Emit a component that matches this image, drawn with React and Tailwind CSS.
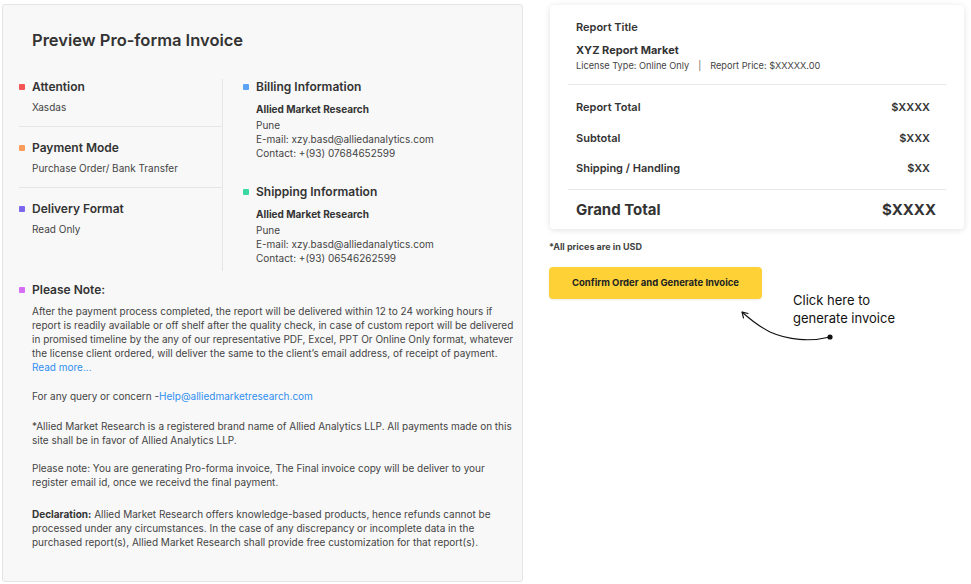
import React from "react";

function Bullet({ color }) {
  return <span className={`inline-block w-[6px] h-[6px] rounded-[1px] mr-[7px] shrink-0 ${color}`} />;
}

function Label({ color, children }) {
  return (
    <div className="flex items-center h-[16px] text-[12px] font-semibold text-[#333]">
      <Bullet color={color} />
      {children}
    </div>
  );
}

function InfoBlock({ color, title, lines }) {
  return (
    <div>
      <Label color={color}>{title}</Label>
      <div className="pl-[13px] mt-[7px] text-[10px] leading-[14px] text-[#444]">
        <div className="font-bold text-[#333]">Allied Market Research</div>
        <div className="mt-[2px]">{lines[0]}</div>
        <div>{lines[1]}</div>
        <div>{lines[2]}</div>
      </div>
    </div>
  );
}

function Row({ label, value }) {
  return (
    <div className="flex items-center justify-between h-[16px] text-[11px] font-semibold text-[#333]">
      <span>{label}</span>
      <span>{value}</span>
    </div>
  );
}

export default function App() {
  return (
    <div className="w-[971px] h-[584px] bg-white flex pt-[4px] pl-[2px] font-['Inter',sans-serif]">
      {/* Left: preview panel */}
      <div className="w-[521px] h-[578px] bg-[#f8f8f8] border border-[#e4e4e4] rounded-[3px] pl-[16px] pr-[12px]">
        <h1 className="mt-[25px] pl-[13px] text-[16.5px] leading-[20px] font-semibold text-[#333]">
          Preview Pro-forma Invoice
        </h1>

        <div className="flex h-[192px] mt-[29px]">
          <div className="w-[204px] border-r border-[#e6e6e6]">
            <Label color="bg-[#f55454]">Attention</Label>
            <div className="pl-[13px] mt-[5px] text-[10px] leading-[14px] text-[#444]">Xasdas</div>
            <div className="mt-[12px] border-t border-[#e6e6e6]" />

            <div className="pt-[13px]">
              <Label color="bg-[#fb9b5c]">Payment Mode</Label>
              <div className="pl-[13px] mt-[5px] text-[10px] leading-[14px] text-[#444]">
                Purchase Order/ Bank Transfer
              </div>
            </div>
            <div className="mt-[12px] border-t border-[#e6e6e6]" />

            <div className="pt-[13px]">
              <Label color="bg-[#7b68ee]">Delivery Format</Label>
              <div className="pl-[13px] mt-[5px] text-[10px] leading-[14px] text-[#444]">Read Only</div>
            </div>
          </div>

          <div className="pl-[20px]">
            <InfoBlock
              color="bg-[#5aa2f6]"
              title="Billing Information"
              lines={["Pune", "E-mail: xzy.basd@alliedanalytics.com", "Contact: +(93) 07684652599"]}
            />
            <div className="h-[24px]" />
            <InfoBlock
              color="bg-[#3ad9a2]"
              title="Shipping Information"
              lines={["Pune", "E-mail: xzy.basd@alliedanalytics.com", "Contact: +(93) 06546262599"]}
            />
          </div>
        </div>

        {/* Please note */}
        <div className="mt-[11px]">
          <Label color="bg-[#d56ef5]">Please Note:</Label>
          <div className="pl-[13px] mt-[6px] text-[10px] leading-[14px] text-[#444] whitespace-nowrap">
            <p>
              After the payment process completed, the report will be delivered within 12 to 24 working hours if
              <br />
              report is readily available or off shelf after the quality check, in case of custom report will be delivered
              <br />
              in promised timeline by the any of our representative PDF, Excel, PPT Or Online Only format, whatever
              <br />
              the license client ordered, will deliver the same to the client’s email address, of receipt of payment.
              <br />
              <span className="text-[#2f8ef0]">Read more...</span>
            </p>
            <p className="mt-[15px]">
              For any query or concern -<span className="text-[#2f8ef0]">Help@alliedmarketresearch.com</span>
            </p>
            <p className="mt-[16px]">
              *Allied Market Research is a registered brand name of Allied Analytics LLP. All payments made on this
              <br />
              site shall be in favor of Allied Analytics LLP.
            </p>
            <p className="mt-[14px]">
              Please note: You are generating Pro-forma invoice, The Final invoice copy will be deliver to your
              <br />
              register email id, once we receivd the final payment.
            </p>
            <p className="mt-[18px]">
              <span className="font-bold text-[#333]">Declaration:</span> Allied Market Research offers knowledge-based products, hence refunds cannot be
              <br />
              processed under any circumstances. In the case of any discrepancy or incomplete data in the
              <br />
              purchased report(s), Allied Market Research shall provide free customization for that report(s).
            </p>
          </div>
        </div>
      </div>

      {/* Right: summary */}
      <div className="ml-[27px] w-[414px] relative">
        <div className="mt-[1px] h-[224px] bg-white rounded-[4px] shadow-[0_1px_6px_rgba(0,0,0,0.12)] px-[18px] pt-[14px]">
          <div className="px-[8px]">
            <div className="text-[11px] leading-[16px] font-semibold text-[#333]">Report Title</div>
            <div className="mt-[7px] text-[11px] leading-[16px] font-bold text-[#333]">XYZ Report Market</div>
            <div className="mt-[2px] text-[9.2px] leading-[12px] text-[#444]">
              License Type: Online Only<span className="px-[9px] text-[#666]">|</span>Report Price: $XXXXX.00
            </div>
          </div>
          <div className="mt-[12px] border-t border-[#e8e8e8]" />
          <div className="pl-[8px] pr-[16px] pt-[14px]">
            <Row label="Report Total" value="$XXXX" />
            <div className="h-[15px]" />
            <Row label="Subtotal" value="$XXX" />
            <div className="h-[14px]" />
            <Row label="Shipping / Handling" value="$XX" />
          </div>
          <div className="mt-[13px] border-t border-[#e8e8e8]" />
          <div className="flex items-center justify-between pl-[8px] pr-[10px] mt-[10px] h-[20px] text-[15px] font-bold text-[#333]">
            <span>Grand Total</span>
            <span>$XXXX</span>
          </div>
        </div>

        <div className="mt-[12px] -ml-[1px] text-[9px] leading-[12px] font-bold text-[#444]">*All prices are in USD</div>

        <button className="mt-[14px] -ml-[1px] w-[213px] h-[32px] rounded-[4px] bg-[#fed236] shadow-[0_1px_2px_rgba(0,0,0,0.08)] text-[9.5px] font-bold text-[#222]">
          Confirm Order and Generate Invoice
        </button>

        <div className="absolute left-[243px] top-[287px] text-[13px] leading-[18px] text-[#111]">
          Click here to
          <br />
          generate invoice
        </div>

        <svg className="absolute left-[188px] top-[302px]" width="100" height="40" viewBox="0 0 100 40" fill="none">
          <path d="M92 31 C72 36 50 34 32 26 C22 21 14 15 4 6" stroke="#111" strokeWidth="1.1" />
          <path d="M4 6 L10 7.5 M4 6 L5.5 12" stroke="#111" strokeWidth="1.1" strokeLinecap="round" />
          <circle cx="92" cy="31" r="2.6" fill="#111" />
        </svg>
      </div>
    </div>
  );
}
